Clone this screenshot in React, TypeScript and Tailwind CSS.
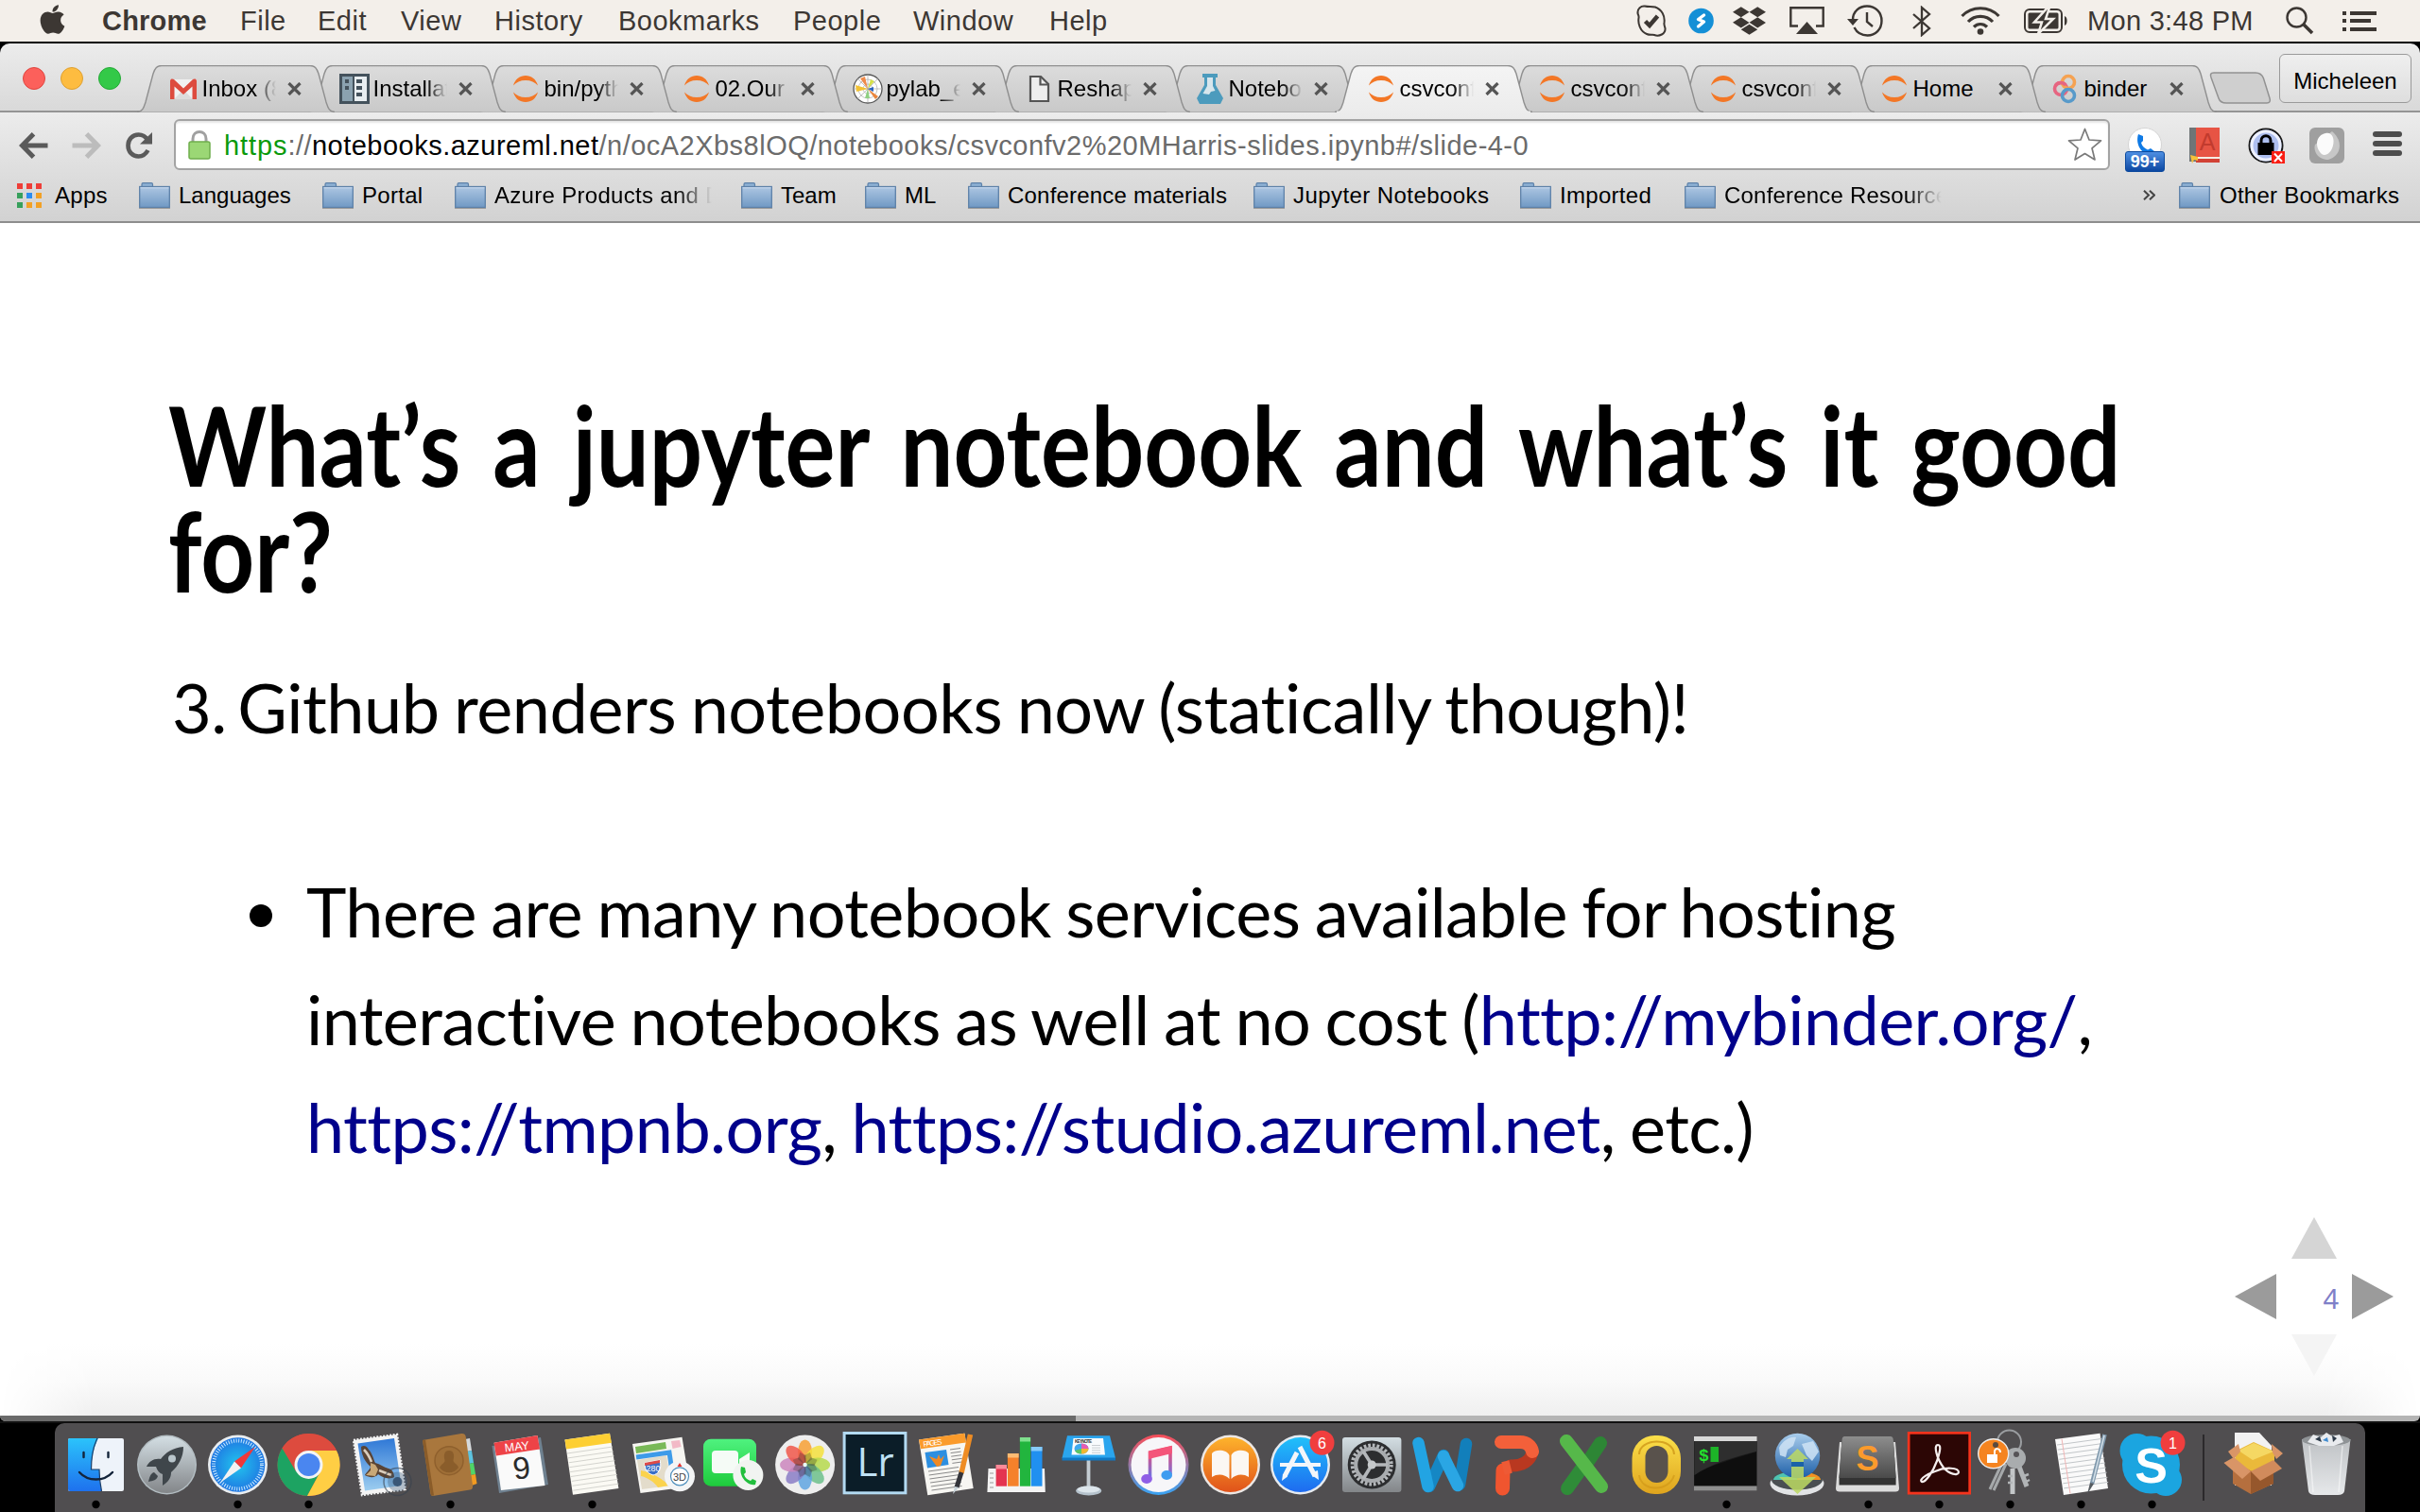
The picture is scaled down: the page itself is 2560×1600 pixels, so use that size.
import type { ReactNode } from "react";
import { FaApple, FaDropbox } from "react-icons/fa";

/* ---------- Menu bar ---------- */

const MENUS = [
  { label: "File", box: "w-[82px]" },
  { label: "Edit", box: "w-[88px]" },
  { label: "View", box: "w-[99px]" },
  { label: "History", box: "w-[131px]" },
  { label: "Bookmarks", box: "w-[185px]" },
  { label: "People", box: "w-[127px]" },
  { label: "Window", box: "w-[144px]" },
  { label: "Help", box: "w-[80px]" },
];

function MenuBar() {
  return (
    <header className="flex h-[44px] items-center bg-[#f3efea] text-[29px] leading-[44px] tracking-[0.5px] text-[#3c3733]">
      <div className="flex w-[108px] justify-start pl-[42px]">
        <FaApple className="-mt-1 h-[35px] w-[27px]" />
      </div>
      <div className="w-[146px] font-bold tracking-[0.2px]">Chrome</div>
      {MENUS.map((m) => (
        <div key={m.label} className={m.box}>
          {m.label}
        </div>
      ))}
      <div className="ml-auto flex h-[44px] items-center">
        <svg className="mr-[23px] h-[34px] w-[32px]" viewBox="0 0 32 34" fill="none" stroke="#3c3733" strokeWidth="2">
          <path d="M9 1.500 C5 1 1 4 1.500 9 C1.800 11 3 12 2.500 14 C1.500 20 4 28 11 31 C14 32.500 17 31.500 19 32 C24 34 31 31 30.500 25 C30.300 23 29 22 29.500 19 C30.500 12 27 5 20 2.500 C16 1.500 13 2.500 9 1.500Z" />
          <path d="M9.500 17.500 L14 22 L22.500 12" strokeWidth="4.500" />
        </svg>
        <svg className="mr-[20px] h-[28px] w-[27px]" viewBox="0 0 27 28">
          <circle cx="13.500" cy="14" r="13.300" fill="#148fd6" />
          <path d="M16.500 8 L10.500 12.500 L16.500 15 L10.500 20" fill="none" stroke="#fff" strokeWidth="3.400" strokeLinecap="round" strokeLinejoin="round" />
        </svg>
        <FaDropbox className="mr-[25px] h-[38px] w-[35px]" />
        <svg className="mr-[24px] h-[30px] w-[37px]" viewBox="0 0 37 30">
          <path d="M9 20.500 H1.300 V1.300 H35.700 V20.500 H28" fill="none" stroke="#3c3733" strokeWidth="2.400" />
          <path d="M18.500 16 L30 29 H7Z" fill="#3c3733" />
        </svg>
        <svg className="mr-[30px] h-[34px] w-[38px]" viewBox="0 0 38 34" fill="none" stroke="#3c3733" strokeWidth="2.400">
          <path d="M6 16 C6 7 13 1.500 21 1.500 C30 1.500 36.500 8 36.500 17 C36.500 26 30 32.500 21.500 32.500 C15 32.500 10 29 7.500 24" />
          <path d="M21 8 V18 L27 23" />
          <path d="M0 15 H12 L6 22Z" fill="#3c3733" stroke="none" />
        </svg>
        <svg className="mr-[30px] h-[33px] w-[22px]" viewBox="0 0 22 33" fill="none" stroke="#3c3733" strokeWidth="2.300">
          <path d="M2 9 L19 24 L11 31 V2 L19 9 L2 24" />
        </svg>
        <svg className="mr-[25px] h-[30px] w-[42px]" viewBox="0 0 42 30" fill="none" stroke="#3c3733" strokeWidth="3.200">
          <path d="M1.500 10 C12 -1 30 -1 40.500 10" />
          <path d="M8 16 C15 8.500 27 8.500 34 16" />
          <path d="M14 21.500 C18 17.500 24 17.500 28 21.500" />
          <circle cx="21" cy="26.500" r="3.300" fill="#3c3733" stroke="none" />
        </svg>
        <svg className="mr-[20px] h-[26px] w-[47px]" viewBox="0 0 47 26">
          <rect x="1" y="1" width="39" height="24" rx="5" fill="none" stroke="#3c3733" strokeWidth="2" />
          <rect x="4.500" y="4.500" width="32" height="17" rx="1.500" fill="#3c3733" />
          <path d="M43 8 C46.500 9 46.500 17 43 18Z" fill="#3c3733" />
          <path d="M25 -1 L11 14.500 H19 L15 27 L31 11 H23 L27 -1Z" fill="#3c3733" stroke="#f3efea" strokeWidth="2.500" />
        </svg>
        <div className="w-[210px] tracking-[0.3px] whitespace-nowrap">Mon 3:48 PM</div>
        <svg className="mr-[30px] h-[30px] w-[30px]" viewBox="0 0 30 30" fill="none" stroke="#3c3733">
          <circle cx="11.500" cy="11.500" r="10" strokeWidth="2.400" />
          <path d="M19 19 L28 28" strokeWidth="3.600" />
        </svg>
        <div className="mr-[46px] flex flex-col gap-[4.500px]">
          <div className="flex h-[4px] gap-[4px]">
            <i className="w-[4px] bg-[#3c3733]" />
            <i className="w-[28px] bg-[#3c3733]" />
          </div>
          <div className="flex h-[4px] gap-[4px]">
            <i className="w-[4px] bg-[#3c3733]" />
            <i className="w-[22px] bg-[#3c3733]" />
          </div>
          <div className="flex h-[4px] gap-[4px]">
            <i className="w-[4px] bg-[#3c3733]" />
            <i className="w-[28px] bg-[#3c3733]" />
          </div>
        </div>
      </div>
    </header>
  );
}

/* ---------- Tab strip ---------- */

const Jupyter = () => (
  <svg className="h-[32px] w-[32px]" viewBox="0 0 32 32" fill="#f37726">
    <path d="M3 12.500 C5 5.500 10 2 16 2 C22 2 27 5.500 29 12.500 C26 9 21.500 7 16 7 C10.500 7 6 9 3 12.500Z" />
    <path d="M3 19.500 C6 23 10.500 25 16 25 C21.500 25 26 23 29 19.500 C27 26.500 22 30 16 30 C10 30 5 26.500 3 19.500Z" />
  </svg>
);
const Gmail = () => (
  <svg className="h-[32px] w-[32px]" viewBox="0 0 32 32">
    <path d="M2 6 H30 V27 H2Z" fill="#f1f1f1" />
    <path d="M6 27 L16 17 L26 27Z" fill="#dcdcdc" />
    <path d="M2 27 V7.500 C2 5 5 5 6 6 L16 15.500 L26 6 C27 5 30 5 30 7.500 V27 H25.500 V13.500 L16 22 L6.500 13.500 V27Z" fill="#dd4b3e" />
  </svg>
);
const Install = () => (
  <svg className="h-[32px] w-[32px]" viewBox="0 0 32 32">
    <rect width="32" height="32" fill="#44525c" />
    <rect x="3" y="3" width="11" height="26" fill="#8ba2b0" />
    <rect x="16" y="3" width="13" height="26" fill="#e8eef1" />
    <path d="M6 6h4v4H6zM6 13h4v4H6zM18 6h6v4h-6zM18 13h6v4h-6zM18 20h6v4h-6z" fill="#44525c" />
  </svg>
);
const Matplotlib = () => (
  <svg className="h-[32px] w-[32px]" viewBox="0 0 32 32">
    <circle cx="16" cy="16" r="15" fill="#fff" stroke="#555" strokeWidth="1.300" />
    <g fill="none" stroke="#aaa" strokeWidth=".7">
      <circle cx="16" cy="16" r="5" />
      <circle cx="16" cy="16" r="10" />
      <path d="M1 16H31M16 1V31M5.500 5.500L26.500 26.500M26.500 5.500L5.500 26.500" />
    </g>
    <path d="M16 16 L8 5 L13 3Z" fill="#ef8a4a" />
    <path d="M16 16 L3 12 L4 19Z" fill="#f2c233" />
    <path d="M16 16 L19 6 L23 8Z" fill="#d5e04a" />
    <path d="M16 16 L24 27 L27 24Z" fill="#e9853d" />
    <path d="M16 16 L22 14 L22 19Z" fill="#2b64c0" />
    <path d="M16 16 L13 26 L18 26Z" fill="#8fd082" />
  </svg>
);
const Page = () => (
  <svg className="h-[32px] w-[32px]" viewBox="0 0 32 32" fill="none" stroke="#555" strokeWidth="2.200">
    <path d="M7 3 H18 L26 11 V29 H7Z" fill="#eee" />
    <path d="M17.500 3 V11.500 H26" />
  </svg>
);
const Flask = () => (
  <svg className="h-[32px] w-[32px]" viewBox="0 0 32 32">
    <path d="M8 0 H24 V4 H22 V12 L30 26 L27 32 H5 L2 26 L10 12 V4 H8Z" fill="#4c9bbd" />
    <path d="M13 4 H19 V13 L21.500 18 L17 19 L15 22 L8.500 21 L13 13Z" fill="#d8e6ec" />
  </svg>
);
const Binder = () => (
  <svg className="h-[32px] w-[32px]" viewBox="0 0 32 32" fill="none" strokeWidth="3.600">
    <circle cx="11" cy="16" r="6.500" stroke="#e66581" />
    <circle cx="19" cy="9" r="6.500" stroke="#f5a252" />
    <circle cx="19" cy="23" r="6.500" stroke="#579aca" />
    <path d="M5.200 13 A6.500 6.500 0 0 1 16 12" stroke="#e66581" />
  </svg>
);

const TABS: { title: string; icon: ReactNode; active?: boolean; whole?: boolean }[] = [
  { title: "Inbox (8", icon: <Gmail /> },
  { title: "Installat", icon: <Install /> },
  { title: "bin/pyth", icon: <Jupyter /> },
  { title: "02.Our", icon: <Jupyter /> },
  { title: "pylab_e", icon: <Matplotlib /> },
  { title: "Reshap", icon: <Page /> },
  { title: "Notebo", icon: <Flask /> },
  { title: "csvconf", icon: <Jupyter />, active: true },
  { title: "csvconf", icon: <Jupyter /> },
  { title: "csvconf", icon: <Jupyter /> },
  { title: "Home", icon: <Jupyter />, whole: true },
  { title: "binder", icon: <Binder />, whole: true },
];

const TAB_PATH =
  "M0 49.500 C6 49 7 45 9 39 L17 9 C19 3 21 .5 26 .5 H183 C188 .5 190 3 192 9 L200 39 C202 45 203 49 209 49.500";

function Tab({ tab, index }: { tab: (typeof TABS)[number]; index: number }) {
  return (
    <div className="relative h-[50px] w-[181px] shrink-0" style={{ zIndex: tab.active ? 30 : 20 - index }}>
      <svg className="absolute top-0 left-0 h-[50px] w-[209px]" viewBox="0 0 209 50">
        <path d={TAB_PATH} fill={tab.active ? "url(#tabOn)" : "url(#tabOff)"} stroke="#8f8f8f" strokeWidth="1.400" />
        {tab.active && <path d="M2 49.500 H207" stroke="#ececec" strokeWidth="2" />}
      </svg>
      <div className="relative flex h-[50px] items-center pl-[33px]">
        {tab.icon}
        <div
          className={
            tab.whole
              ? "ml-[3.500px] w-[86px] text-[24px] leading-[48px] whitespace-nowrap text-black"
              : "mr-[8px] ml-[3.500px] w-[78px] overflow-hidden text-[24px] leading-[48px] whitespace-nowrap text-black [mask-image:linear-gradient(to_right,black_72%,transparent_100%)]"
          }
        >
          {tab.title}
        </div>
        <svg className="ml-[4px] h-[14px] w-[15px]" viewBox="0 0 15 14" stroke="#555" strokeWidth="3.200">
          <path d="M1.500 1 L13.500 13 M13.500 1 L1.500 13" />
        </svg>
      </div>
    </div>
  );
}

function TabStrip() {
  return (
    <div className="bg-black">
      <div className="flex h-[73px] items-end rounded-t-[10px] border-b-2 border-[#949494] bg-linear-to-b from-[#ececec] to-[#d9d9d9]">
        <svg className="h-0 w-0">
          <defs>
            <linearGradient id="tabOff" x1="0" x2="0" y1="0" y2="1">
              <stop offset="0" stopColor="#dcdcdc" />
              <stop offset="1" stopColor="#c9c9c9" />
            </linearGradient>
            <linearGradient id="tabOn" x1="0" x2="0" y1="0" y2="1">
              <stop offset="0" stopColor="#f4f4f4" />
              <stop offset="1" stopColor="#ececec" />
            </linearGradient>
          </defs>
        </svg>
        <div className="mb-[22px] ml-[24px] flex w-[121px] gap-4">
          <i className="h-6 w-6 rounded-full border border-[#e0443e] bg-[#fc605b]" />
          <i className="h-6 w-6 rounded-full border border-[#dea030] bg-[#fdbc40]" />
          <i className="h-6 w-6 rounded-full border border-[#24a936] bg-[#33c948]" />
        </div>
        <div className="isolate -mb-[2px] flex h-[50px]">
          {TABS.map((tab, i) => (
            <Tab key={i} tab={tab} index={i} />
          ))}
        </div>
        <svg className="mb-[7px] ml-[20px] h-[34px] w-[66px]" viewBox="0 0 66 34">
          <path
            d="M5 1 H49 C54 1 56 3 57.500 7 L64 28 C65 31 64 33 61 33 H18 C13 33 11 31 10 28 L2 6 C1 3 1 1 5 1Z"
            fill="#cfcfcf"
            stroke="#929292"
            strokeWidth="1.500"
          />
        </svg>
        <div className="mb-[8px] ml-[8px] h-[52px] w-[140px] rounded-[6px] border border-[#9a9a9a] bg-linear-to-b from-[#efefef] to-[#dedede] text-center text-[24px] leading-[55px] text-black">
          Micheleen
        </div>
      </div>
    </div>
  );
}

/* ---------- Toolbar ---------- */

function Extensions() {
  return (
    <>
      <div className="relative ml-[18px] h-[48px] w-[38px] self-start">
        <svg className="h-[36px] w-[38px]" viewBox="0 0 38 36">
          <circle cx="19" cy="18" r="17.500" fill="#fff" stroke="#d4d4d4" />
          <path d="M12 7 L17 9 L17 14 L15 16 C16 20 19 22 22 23.500 L25 22 L29 25 L27 29 C18 31 8 19 12 7Z" fill="#0f7ae5" />
        </svg>
        <div className="absolute top-[25px] -left-[2px] h-[22px] w-[42px] rounded-[3px] border border-[#0c4a9e] bg-linear-to-b from-[#4e8fe2] to-[#0b48a2] text-center text-[18px] leading-[21px] font-bold text-white">
          99+
        </div>
      </div>
      <svg className="ml-[27px] h-[38px] w-[34px]" viewBox="0 0 34 38">
        <rect x="1" y="0" width="9" height="36" fill="#6f7577" />
        <rect x="8" y="0" width="25" height="31" fill="#e75444" />
        <text x="20" y="24" fontSize="25" textAnchor="middle" fill="#c23b2e">A</text>
        <path d="M8 31 H33 V33 H8Z" fill="#f6eee4" />
        <path d="M8 33 H33 V37 H8Z" fill="#d24236" />
        <path d="M2 29 L10 31 V35 L6 34 L4 38Z" fill="#f5c13a" />
      </svg>
      <svg className="ml-[29px] h-[38px] w-[39px]" viewBox="0 0 39 38">
        <circle cx="19" cy="19" r="17.500" fill="#aebff0" stroke="#1a1a1a" strokeWidth="2" />
        <circle cx="19" cy="19" r="15" fill="none" stroke="#eef1ff" strokeWidth="3" />
        <path d="M14 17 V14 C14 7 24 7 24 14 V17" fill="none" stroke="#000" strokeWidth="3" />
        <rect x="10.500" y="16" width="17" height="13" fill="#000" />
        <rect x="25" y="25" width="14" height="13" fill="#fa1e14" />
        <path d="M28 27.500 L36 36 M36 27.500 L28 36" stroke="#fff" strokeWidth="2" />
      </svg>
      <svg className="ml-[26px] h-[38px] w-[38px]" viewBox="0 0 38 38">
        <rect width="37" height="38" rx="6" fill="#9f9f9f" />
        <path d="M24 4 C36 14 34 30 20 34 C8 34 4 24 6 18Z" fill="#c7c7c7" />
        <path d="M17 6 C24 4 27 12 25 19 C23 27 17 31 13 28 C5 20 7 8 17 6Z" fill="#fbfbfb" />
      </svg>
      <div className="ml-[29px] flex w-[31px] flex-col gap-[4px] self-start pt-[4px]">
        <i className="h-[6px] rounded-full bg-[#4d4d4d]" />
        <i className="h-[6px] rounded-full bg-[#4d4d4d]" />
        <i className="h-[6px] rounded-full bg-[#4d4d4d]" />
      </div>
    </>
  );
}

function AddressRow() {
  return (
    <div className="flex h-[62px] items-start pt-[7px]">
      <svg className="mt-[14px] ml-[20px] h-[28px] w-[32px]" viewBox="0 0 32 28" fill="none" stroke="#5a5a5a" strokeWidth="5">
        <path d="M30.500 14 H5 M15.500 1.800 L3.500 14 L15.500 26.200" />
      </svg>
      <svg className="mt-[14px] ml-[23px] h-[28px] w-[32px]" viewBox="0 0 32 28" fill="none" stroke="#bcbcbc" strokeWidth="5">
        <path d="M1.500 14 H27 M16.500 1.800 L28.500 14 L16.500 26.200" />
      </svg>
      <svg className="mt-[14px] ml-[26px] h-[28px] w-[29px]" viewBox="0 0 29 28">
        <path d="M23.500 19 C21 23.500 17.500 25.500 13.500 25.500 C7 25.500 2.500 20.500 2.500 14 C2.500 7.500 7 2.500 13.500 2.500 C18 2.500 21 4.500 23 8" fill="none" stroke="#5a5a5a" strokeWidth="4.600" />
        <path d="M28 0 V12.500 H15Z" fill="#5a5a5a" />
      </svg>
      <div className="ml-[22px] flex h-[54px] w-[2048px] items-center rounded-[6px] border-2 border-[#a3a3a3] bg-white shadow-[inset_0_2px_2px_#e6e6e6]">
        <svg className="ml-[13px] h-[31px] w-[24px]" viewBox="0 0 24 31">
          <path d="M5 13 V9 C5 -1 19 -1 19 9 V13" fill="none" stroke="#a0a0a0" strokeWidth="3" />
          <rect x="1" y="12" width="22" height="18" rx="2" fill="#9bd775" stroke="#6fae4c" strokeWidth="1.500" />
        </svg>
        <div className="ml-[14px] pt-[2px] text-[29px] leading-[50px] tracking-[0.480px] whitespace-nowrap text-[#6b6b6b]">
          <span className="tracking-[0.900px] text-[#0b9a0b]">https</span>://<span className="text-black">notebooks.azureml.net</span>
          /n/ocA2Xbs8lOQ/notebooks/csvconfv2%20MHarris-slides.ipynb#/slide-4-0
        </div>
        <svg className="mr-[6px] ml-auto h-[36px] w-[37px]" viewBox="0 0 37 36">
          <path
            d="M18.500 1.500 L23 13 L35.500 13.800 L26 21.800 L29 34 L18.500 27.500 L8 34 L11 21.800 L1.500 13.800 L14 13Z"
            fill="#fff"
            stroke="#7a7a7a"
            strokeWidth="1.700"
            strokeLinejoin="round"
          />
        </svg>
      </div>
      <div className="flex h-[54px] items-start pt-[9px]">
        <Extensions />
      </div>
    </div>
  );
}

const Folder = () => (
  <svg className="h-[28px] w-[33px] shrink-0" viewBox="0 0 33 28">
    <defs>
      <linearGradient id="folder" x1="0" x2="0" y1="0" y2="1">
        <stop offset="0" stopColor="#adc6e2" />
        <stop offset="1" stopColor="#7099c4" />
      </linearGradient>
    </defs>
    <path d="M3 6 V2 C3 1 3.500 .6 4.500 .6 H13 C14 .6 14.500 1 14.500 2 V6" fill="#8db0d4" stroke="#5d81a8" strokeWidth="1.200" />
    <rect x=".7" y="4.500" width="31.600" height="22" fill="url(#folder)" stroke="#5d81a8" strokeWidth="1.300" />
    <path d="M1.500 5.800 H31.500" stroke="#c9dbef" strokeWidth="1" />
    <path d="M0 27.500 H33" stroke="#9b9b9b" strokeWidth="1" />
  </svg>
);

const FADE = "overflow-hidden [mask-image:linear-gradient(to_right,black_84%,transparent_100%)]";

const BOOKMARKS = [
  { label: "Languages", box: "w-[152px]", track: "tracking-normal", fade: false },
  { label: "Portal", box: "w-[98px]", track: "tracking-[0.3px]", fade: false },
  { label: "Azure Products and D", box: "mr-[31px] w-[230px]", track: "tracking-[0.3px]", fade: true },
  { label: "Team", box: "w-[89px]", track: "tracking-normal", fade: false },
  { label: "ML", box: "w-[67px]", track: "tracking-normal", fade: false },
  { label: "Conference materials", box: "w-[260px]", track: "tracking-[0.200px]", fade: false },
  { label: "Jupyter Notebooks", box: "w-[240px]", track: "tracking-[0.430px]", fade: false },
  { label: "Imported", box: "w-[132px]", track: "tracking-[0.300px]", fade: false },
  { label: "Conference Resources", box: "w-[230px]", track: "tracking-[0.200px]", fade: true },
];

function BookmarksBar() {
  return (
    <div className="flex h-[55px] items-center pb-[1px] text-[24px] leading-[48px] whitespace-nowrap text-black">
      <div className="ml-[18px] grid grid-cols-3 gap-x-[4px] gap-y-[4px]">
        {["bg-[#ee3e38]", "bg-[#ee3e38]", "bg-[#ee3e38]", "bg-[#37a05c]", "bg-[#2b8cf0]", "bg-[#f2a126]", "bg-[#37a05c]", "bg-[#f2a126]", "bg-[#f2a126]"].map(
          (c, i) => (
            <i key={i} className={"h-[6px] w-[6px] " + c} />
          ),
        )}
      </div>
      <div className="ml-[14px] w-[89px] tracking-[0.3px]">Apps</div>
      {BOOKMARKS.map((b) => (
        <div key={b.label} className="flex items-center">
          <Folder />
          <div className={"ml-[9px] " + b.box + " " + b.track + " " + (b.fade ? FADE : "")}>{b.label}</div>
        </div>
      ))}
      <svg className="ml-auto h-[11px] w-[13px]" viewBox="0 0 13 11" fill="none" stroke="#444" strokeWidth="2">
        <path d="M1 .7 L6 5.500 L1 10.300 M7 .7 L12 5.500 L7 10.300" />
      </svg>
      <div className="ml-[25px] flex items-center">
        <Folder />
        <div className="ml-[10px] w-[212px] tracking-[0.240px]">Other Bookmarks</div>
      </div>
    </div>
  );
}

/* ---------- Slide ---------- */

function SlideControls() {
  return (
    <nav className="absolute top-[1052px] left-[2364px] grid w-[168px] grid-cols-[44px_80px_44px] grid-rows-[44px_80px_44px]">
      <svg className="col-start-2 row-start-1 h-[44px] w-[48px] justify-self-center" viewBox="0 0 48 44">
        <path d="M24 0 L48 44 H0Z" fill="#d5d5d5" />
      </svg>
      <svg className="col-start-1 row-start-2 h-[48px] w-[44px] self-center" viewBox="0 0 44 48">
        <path d="M44 0 V48 L0 24Z" fill="#9b9b9b" />
      </svg>
      <span className="col-start-2 row-start-2 mt-[3px] mr-[14px] self-center justify-self-end font-['Noto_Sans'] text-[29px] leading-[30px] text-[#7f80c8]">4</span>
      <svg className="col-start-3 row-start-2 h-[48px] w-[44px] self-center" viewBox="0 0 44 48">
        <path d="M0 0 V48 L44 24Z" fill="#9b9b9b" />
      </svg>
      <svg className="col-start-2 row-start-3 h-[44px] w-[48px] justify-self-center" viewBox="0 0 48 44">
        <path d="M24 44 L48 0 H0Z" fill="#f4f4f4" />
      </svg>
    </nav>
  );
}

function Slide() {
  return (
    <main className="relative flex h-[1262px] flex-col bg-white pt-[178px] font-['Lato'] text-black">
      <div className="absolute inset-x-0 bottom-0 h-[76px] bg-linear-to-b from-white via-[#fafafa] to-[#efefef] [mask-image:linear-gradient(to_right,transparent_0,black_100px,black_2460px,transparent_100%)]" />
      <h1 className="ml-[178px] w-[2450px] origin-left scale-x-[0.848] text-[117px] leading-[112px] font-bold [word-spacing:11.700px]">
        What’s a jupyter notebook and what’s it good
        <br />
        for?
      </h1>
      <div className="relative text-[72px] leading-[114px] tracking-[-0.600px] whitespace-nowrap [word-spacing:-2.400px]">
        <p className="mt-[53px] ml-[182px] tracking-[-0.480px]">
          3.<span className="-ml-[4px]"> Github renders notebooks now (statically though)!</span>
        </p>
        <ul className="mt-[102px] ml-[264px]">
          <li className="flex">
            <i className="mt-[50px] mr-[36px] h-[24px] w-[24px] rounded-full bg-black" />
            <div>
              There are many notebook services available for hosting
              <br />
              interactive notebooks as well at no cost (<a className="text-[#00008b]">http://mybinder.org/</a>,
              <br />
              <a className="text-[#00008b]">https://tmpnb.org</a>, <a className="text-[#00008b]">https://studio.azureml.net</a>, etc.)
            </div>
          </li>
        </ul>
      </div>
      <SlideControls />
    </main>
  );
}

/* ---------- Dock ---------- */

function Badge({ n }: { n: string }) {
  return (
    <>
      <circle cx="59.500" cy="20.700" r="13" fill="#f03e3e" />
      <text x="59.500" y="26.500" fontSize="16" textAnchor="middle" fill="#fff">{n}</text>
    </>
  );
}

const lines = (count: number, x1: number, y1: number, x2: number, y2: number, dx: number, dy: number) =>
  Array.from({ length: count }, (_, i) => `M${x1 + dx * i} ${y1 + dy * i} L${x2 + dx * i} ${y2 + dy * i}`).join(" ");

const PETALS = ["#f7a035", "#f5e13c", "#b6d94c", "#6cc08b", "#5fa5e0", "#8a7cc5", "#cb86bd", "#f0574a"];

const APPS: { name: string; run?: boolean; art: ReactNode }[] = [
  {
    name: "Finder",
    run: true,
    art: (
      <>
        <rect x="8" y="16" width="59" height="56" rx="2" fill="#eef3fa" />
        <path d="M10 16 H40 C35 26 33 36 32.500 49 H41 C41 57 42 65 43.500 72 H10 Q8 72 8 70 V18 Q8 16 10 16Z" fill="url(#finder)" />
        <path d="M39 16 C34 26 32.500 36 32.500 49 H41 C41 57 42 65 43.500 72" fill="none" stroke="#1d3e66" strokeWidth="1.200" />
        <path d="M24.500 31 V36 M50.500 31 V36 M20 52 C29 62 46 62 55 52" fill="none" stroke="#14243a" strokeWidth="2.400" strokeLinecap="round" />
      </>
    ),
  },
  {
    name: "Launchpad",
    art: (
      <>
        <circle cx="37.500" cy="44" r="31.500" fill="#b3bdc2" />
        <circle cx="37.500" cy="44" r="30" fill="url(#silver)" />
        <path d="M55 25 C44 26 36 31 31 38 C24 37 19 40 16 46 L26 46 C27 50 30 53 33 54 L33 66 C39 62 42 58 42 52 C50 45 55 36 55 25Z" fill="#3f464b" />
        <circle cx="43" cy="37.500" r="4" fill="#b9c6cc" />
        <path d="M24 52 C20 53 19 58 18 62 C23 61 27 60 28 56Z" fill="#3f464b" />
      </>
    ),
  },
  {
    name: "Safari",
    run: true,
    art: (
      <>
        <circle cx="37.500" cy="44" r="31.500" fill="#e9edf0" />
        <circle cx="37.500" cy="44" r="28.800" fill="url(#safari)" />
        <circle cx="37.500" cy="44" r="25.500" fill="none" stroke="#cdeaff" strokeWidth="4" strokeDasharray="1 1.670" />
        <path d="M56 25 L41 47.500 L34 40.500Z" fill="#f0383a" />
        <path d="M19 63 L34 40.500 L41 47.500Z" fill="#f2f2f2" />
      </>
    ),
  },
  {
    name: "Chrome",
    run: true,
    art: (
      <>
        <circle cx="37.500" cy="44" r="33" fill="#dd4b3e" />
        <path d="M9.500 26.500 A33 33 0 0 0 36 77 L50 51 L37.500 44Z" fill="#1da362" />
        <path d="M36 77 A33 33 0 0 0 67 29 L37.500 29 L50 51Z" fill="#ffce44" />
        <path d="M9.500 26.500 L24 51 L37.500 44 V29 H67 C62 18 51 11 37.500 11 C26 11 15 17 9.500 26.500Z" fill="#dd4b3e" />
        <circle cx="37.500" cy="44" r="15" fill="#f4f4f4" />
        <circle cx="37.500" cy="44" r="12" fill="#4a86f0" />
      </>
    ),
  },
  {
    name: "Mail",
    art: (
      <>
        <path d="M10 18 L56 12 L64.500 70 L19 76Z" fill="#f4f4f4" stroke="#f4f4f4" strokeWidth="2.500" strokeDasharray="2 1.500" />
        <path d="M14.500 21.500 L53 16 L60.500 66 L22 71.500Z" fill="url(#sky)" />
        <path d="M18 25 C21 23 24 24 26 28 C30 32 31 38 33 42 C38 43 42 47 47 48 C51 49 53 53 53 57 C48 60 41 58 36 54 C33 58 27 58 22 55 C23 52 27 50 28 46 C22 41 18 33 18 25Z" fill="#5a4435" />
        <path d="M28 42 L33 44 L36 49 L33 56 L23 55 L28 50Z" fill="#c9a877" />
        <path d="M21 28 C24 31 27 36 29 41 M37 50 L50 55" stroke="#d9cdbd" strokeWidth="2.600" fill="none" />
        <circle cx="56.500" cy="62" r="14.500" fill="none" stroke="#39424e" strokeWidth="1.500" opacity=".6" />
        <circle cx="56.500" cy="62" r="10.500" fill="#3a5878" opacity=".35" />
        <circle cx="56.500" cy="62" r="5" fill="#2d4664" opacity=".8" />
      </>
    ),
  },
  {
    name: "Contacts",
    run: true,
    art: (
      <>
        <path d="M53 17 L58 16 L60 29 L55 30Z" fill="#d5d9db" />
        <path d="M55 30 L60 29 L62 42 L57 43Z" fill="#5cc3e0" />
        <path d="M57 43 L62 42 L64 54 L59 55Z" fill="#4fd667" />
        <path d="M59 55 L64 54 L65.500 64 L60 66Z" fill="#f29b21" />
        <path d="M8 18 L49 11 Q53 10.500 53.700 14 L61 66 Q61.500 70 58 70.500 L19 77 Q17 77 16.500 75Z" fill="#a9773d" />
        <path d="M8 18 L11 17.500 L20 76.500 L17 76.500Z" fill="#8a5c29" />
        <circle cx="36" cy="39.700" r="15" fill="#a07038" stroke="#8f602d" strokeWidth="1.500" />
        <path d="M36 29 C41 29 42 34 40.500 39 C40 42 45 43 46 47 C41 54 31 54 26 47 C28 43 32 42 31.500 39 C30 34 31 29 36 29Z" fill="#8a5d2b" />
      </>
    ),
  },
  {
    name: "Calendar",
    art: (
      <>
        <path d="M6.500 24 L58 15 L66 65 L14 74Z" fill="#6f8190" />
        <path d="M8.600 20.700 L54.500 13 L62.500 66 L16 71Z" fill="#fafafa" />
        <path d="M8.600 20.700 L54.500 13 L57 27.500 L10.800 34.500Z" fill="#ee4347" />
        <g transform="rotate(-7 33 26)">
          <text x="33" y="29" fontSize="12.500" textAnchor="middle" fill="#fff">MAY</text>
          <text x="35" y="59" fontSize="33" textAnchor="middle" fill="#2b2b2b">9</text>
        </g>
      </>
    ),
  },
  {
    name: "Notes",
    run: true,
    art: (
      <>
        <path d="M8.500 17.500 L56 10.700 L65.400 69 L17 75.700Z" fill="#fbfaf4" />
        <path d="M8.500 17.500 L56 10.700 L58 20.700 L10 27.500Z" fill="#fdcf33" />
        <path d={lines(9, 11, 32, 59, 25, 0.8, 4.9)} stroke="#cfcfca" strokeWidth=".9" />
      </>
    ),
  },
  {
    name: "Maps",
    art: (
      <>
        <path d="M5 22 L57.500 14.700 L66 67 L13.500 74Z" fill="#f6f5f1" />
        <path d="M8 25 L40 20 L41 27 L9 32Z" fill="#79b957" />
        <path d="M46 19 L55 18 L56.500 25 L47.500 27Z" fill="#f2b9c6" />
        <path d="M10 39 L41 34 L46 66 L15 70Z" fill="#e3dccb" />
        <path d="M14 50 C26 52 38 60 44 66 L32 68 C28 62 20 57 14 56Z" fill="#fbd34d" />
        <path d="M9 36 L44 31 L48 58" fill="none" stroke="#3d9be9" strokeWidth="5" />
        <path d="M18 42 L34 39 C37 50 31 54 27 55 C21 53 18 50 18 42Z" fill="#3a6fc8" stroke="#fff" />
        <path d="M18 42 L34 39 L34 42 L18 45Z" fill="#de4a47" />
        <text x="27" y="51" fontSize="9" textAnchor="middle" fill="#fff">280</text>
        <circle cx="55" cy="56.300" r="16" fill="#f3f4f5" />
        <circle cx="55" cy="56.300" r="9.500" fill="#fff" stroke="#4b8dbb" strokeWidth="1.200" />
        <text x="55" y="60.500" fontSize="11" textAnchor="middle" fill="#444">3D</text>
        <path d="M55 42 L57.500 46 H52.500Z" fill="#e5332e" />
      </>
    ),
  },
  {
    name: "FaceTime",
    art: (
      <>
        <rect x="5" y="16.700" width="56" height="50" rx="8" fill="url(#green)" />
        <rect x="14" y="29" width="28" height="24" rx="4" fill="#f5fbf6" />
        <path d="M43 38 L54 31 V51 L43 44Z" fill="#f5fbf6" />
        <circle cx="52.400" cy="55" r="16" fill="#f1f4f1" />
        <path d="M45 46 L49 47 L50 52 L48 54 C49 58 52 60 55 61 L57 59 L61 61 L60 65 C52 67 42 56 45 46Z" fill="#21bf3d" />
      </>
    ),
  },
  {
    name: "Photos",
    art: (
      <>
        <circle cx="37.600" cy="44" r="31.500" fill="#eeeeee" />
        {PETALS.map((c, i) => (
          <ellipse key={c} cx="37.600" cy="30.500" rx="7.500" ry="13" fill={c} opacity=".85" transform={`rotate(${i * 45} 37.600 44)`} />
        ))}
        {PETALS.map((c, i) => (
          <path key={c} d="M37.600 44 L32.800 35.500 L37.600 30 L42.400 35.500Z" fill="#333" opacity=".3" transform={`rotate(${i * 45 + 22.5} 37.600 44)`} />
        ))}
        <circle cx="37.600" cy="44" r="2.200" fill="#eafff5" />
      </>
    ),
  },
  {
    name: "Lightroom",
    art: (
      <>
        <rect x="2.600" y="9" width="67.800" height="66.300" fill="#b3daf2" />
        <rect x="5.600" y="12" width="61.800" height="60.300" fill="#0b1d28" />
        <text x="37" y="55.500" fontSize="42" textAnchor="middle" fill="#bfe1f4" fontFamily="Open Sans" fontWeight="500">Lr</text>
      </>
    ),
  },
  {
    name: "Pages",
    art: (
      <>
        <path d="M8 17.500 L56.400 10.700 L65.700 69 L17.300 76.300Z" fill="#f7f6f2" />
        <path d="M8 17.500 L56.400 10.700 L58 20.500 L10 27.300Z" fill="#fb9b2b" />
        <text x="13" y="25" fontSize="8" fill="#fff" transform="rotate(-8 13 25)" textLength="20">PAGES</text>
        <path d="M14.500 31 L37 28 L39.500 44 L17 47.500Z" fill="#2d8fe0" />
        <path d="M27 46 L19 35 L27 38 L29 33 L31 38 L35 34 L31 45Z" fill="#f08a24" />
        <path d={lines(5, 41, 28, 52, 26.5, 0.6, 3.6)} stroke="#8a8a8a" strokeWidth="1" />
        <path d={lines(6, 18, 51, 50, 46.5, 0.7, 4)} stroke="#8a8a8a" strokeWidth="1" />
        <path d="M62.500 12 L53 53" stroke="#ee8c23" strokeWidth="5.500" />
        <path d="M53 52 L48 68" stroke="#33343a" strokeWidth="5" />
        <path d="M50.300 68 L46 67 L44 75Z" fill="#c9d4db" />
      </>
    ),
  },
  {
    name: "Numbers",
    art: (
      <>
        <path d="M6.500 48 H66 L66.800 73 H5.400Z" fill="#f4f4f4" />
        <path d="M8 53 H12 M8 58 H12 M8 63 H12 M8 68 H12" stroke="#999" strokeWidth="1" />
        <rect x="14.600" y="44" width="11.400" height="22.700" fill="#e43350" />
        <rect x="26.900" y="32" width="11.700" height="34.700" fill="#f5812b" />
        <rect x="39.900" y="15" width="11.200" height="51.700" fill="#22b53e" />
        <rect x="51.700" y="25" width="11.800" height="41.700" fill="#2090f0" />
        <path d="M14.600 44 h11.400 v4.500 H14.600z" fill="#f98a98" />
        <path d="M26.900 32 h11.700 v4.500 H26.900z" fill="#fdbb74" />
        <path d="M39.900 15 h11.200 v4.500 H39.900z" fill="#7fe08d" />
        <path d="M51.700 25 h11.800 v4.500 H51.700z" fill="#86cbfb" />
      </>
    ),
  },
  {
    name: "Keynote",
    art: (
      <>
        <path d="M35.600 38 H39.400 V72 H35.600Z" fill="#c4ccd2" />
        <ellipse cx="37.700" cy="71.500" rx="13.500" ry="5" fill="#b5c2cc" />
        <ellipse cx="37.700" cy="70" rx="12" ry="3.500" fill="#dde6ec" />
        <path d="M15 13.300 H60 L66 37 H9.500Z" fill="#2aa5ee" />
        <path d="M9.500 36.500 H66 V39.500 H9.500Z" fill="#0f78c4" />
        <path d="M21.500 16 H53 L55 33.500 H19.500Z" fill="#f8fbfd" />
        <text x="23" y="20.500" fontSize="4.600" fontWeight="700" fill="#333" textLength="18">KEYNOTE</text>
        <ellipse cx="30" cy="27" rx="7.500" ry="5.500" fill="#3fa9ee" />
        <path d="M30 27 V21.500 A7.500 5.500 0 0 1 37.500 27Z" fill="#e55cb0" />
        <path d="M30 27 H37.500 A7.500 5.500 0 0 1 30 32.500Z" fill="#f0b632" />
        <path d="M30 27 V32.500 A7.500 5.500 0 0 1 23 29Z" fill="#5cc563" />
        <path d={lines(4, 41, 23.5, 50, 23.5, 0, 2.6)} stroke="#c9ced2" strokeWidth="1" />
      </>
    ),
  },
  {
    name: "iTunes",
    art: (
      <>
        <circle cx="36.500" cy="44" r="32" fill="url(#itunesRing)" />
        <circle cx="36.500" cy="44" r="29" fill="#f7f6f9" />
        <path d="M27.500 60 V31 L49 26 V54" fill="none" stroke="url(#itunesNote)" strokeWidth="3.600" />
        <path d="M26 30 L50.700 24 V32 L26 38Z" fill="#f4557a" />
        <ellipse cx="24" cy="59" rx="5.800" ry="5" fill="#8f5ee6" />
        <ellipse cx="45.200" cy="55" rx="5.800" ry="5" fill="#3e9cf0" />
      </>
    ),
  },
  {
    name: "iBooks",
    art: (
      <>
        <circle cx="37.500" cy="44" r="31.500" fill="#ece7e4" />
        <circle cx="37.500" cy="44" r="29" fill="url(#ibooks)" />
        <path d="M36.500 59 V34 C34 28 22 27 18 32 V57 C24 53 32 54 36.500 59Z" fill="#fbf7f3" />
        <path d="M38.500 59 V34 C41 28 53 27 57 32 V57 C51 53 43 54 38.500 59Z" fill="#fbf7f3" />
      </>
    ),
  },
  {
    name: "App Store",
    art: (
      <>
        <circle cx="36.500" cy="44" r="31.500" fill="#e6ebf0" />
        <circle cx="36.500" cy="44" r="29" fill="url(#appstore)" />
        <path d="M15 44 H58" stroke="#f3f6fa" strokeWidth="4" />
        <path d="M33 31 L20 56 M36 25 L52 56" stroke="#f3f6fa" strokeWidth="5" />
        <path d="M18 54 L23 56.500 L17 61Z M49 52 L55 50 L56 60 L50 56Z" fill="#f3f6fa" />
        <Badge n="6" />
      </>
    ),
  },
  {
    name: "System Preferences",
    art: (
      <>
        <rect x="6" y="15" width="62.400" height="58" rx="3" fill="url(#silver)" />
        <circle cx="37.200" cy="44" r="25.500" fill="#2c2d2f" />
        <circle cx="37.200" cy="44" r="20.500" fill="none" stroke="#b4b7ba" strokeWidth="4" strokeDasharray="2.700 1.900" />
        <circle cx="37.200" cy="44" r="17" fill="none" stroke="#a9acaf" strokeWidth="4" />
        <path d="M37.200 44 L28 29.500 M37.200 44 H54 M37.200 44 L28 59" stroke="#b4b7ba" strokeWidth="3.600" />
        <circle cx="37.200" cy="44" r="4.500" fill="#c5c8ca" />
      </>
    ),
  },
  {
    name: "Word",
    art: (
      <g fill="none" strokeLinecap="round" strokeWidth="12.500">
        <path d="M62 22 L55 65" stroke="#127fbb" />
        <path d="M23 67 L38 34" stroke="#1587c4" />
        <path d="M38 35 L53 66" stroke="#2aa6e4" />
        <path d="M11.500 21 L21.500 67" stroke="#22a4e3" />
      </g>
    ),
  },
  {
    name: "PowerPoint",
    art: (
      <g fill="none" strokeLinecap="round">
        <path d="M44 20 C64 20 60 46 34 45" stroke="#b93820" strokeWidth="13" />
        <path d="M24 20 H44 C52 20 56 25 57 30" stroke="#f3603a" strokeWidth="14" />
        <path d="M26 50 L25.500 69" stroke="#f0552f" strokeWidth="15" />
        <path d="M26 48 L34 46" stroke="#ee5a35" strokeWidth="14" strokeLinecap="butt" />
      </g>
    ),
  },
  {
    name: "Excel",
    art: (
      <g fill="none" strokeLinecap="round" strokeWidth="14">
        <path d="M54 21 L40 42" stroke="#2d8635" />
        <path d="M34 48 L19 69" stroke="#2f8c38" />
        <path d="M18 19 L55 67" stroke="#56b84a" />
      </g>
    ),
  },
  {
    name: "Outlook",
    art: (
      <>
        <rect x="12.500" y="13" width="51.500" height="62" rx="24" fill="url(#gold)" />
        <rect x="26.500" y="24" width="24" height="39" rx="12" fill="#59524c" />
        <path d="M20 33 C20 16 56 14 57 33" fill="none" stroke="#c98f12" strokeWidth="2" opacity=".7" />
        <path d="M20 55 C22 73 52 73 57 55" fill="none" stroke="#c98f12" strokeWidth="2" opacity=".5" />
      </>
    ),
  },
  {
    name: "Terminal",
    run: true,
    art: (
      <>
        <rect x="3" y="14" width="66.600" height="57.500" fill="#1c1c1c" />
        <rect x="3" y="14" width="66.600" height="5" fill="#d9d9d9" />
        <path d="M3.500 55 C20 44 45 38 69 30 V66 H3.500Z" fill="#0e0e0e" />
        <path d="M3.500 19 H69 V30 C45 36 20 43 3.500 55Z" fill="#2e2e2e" />
        <rect x="3" y="66.500" width="66.600" height="5" fill="#8f8f8f" />
        <text x="8" y="40" fontSize="18" fontFamily="Liberation Mono" fontWeight="700" fill="#23e02d">$</text>
        <rect x="20.500" y="25" width="8.500" height="16" fill="#1db428" />
      </>
    ),
  },
  {
    name: "Downloader",
    art: (
      <>
        <ellipse cx="37" cy="64" rx="28.500" ry="12.500" fill="#e2e4e6" />
        <ellipse cx="37" cy="60" rx="27" ry="10.500" fill="#4a4f52" />
        <path d="M12 60 A25 9 0 0 1 37 51 V60Z" fill="#4ec5b2" />
        <path d="M62 60 A25 9 0 0 0 37 51 V60Z" fill="#f29222" />
        <circle cx="37.500" cy="34.500" r="23.700" fill="url(#globe)" />
        <path d="M18 26 C22 18 30 14 36 15 L33 24 L27 28 L25 36 L19 34Z M42 22 L54 19 L60 30 L53 40 L47 34Z" fill="#cfe3f5" opacity=".85" />
        <path d="M37.500 27 L49 38 H44 V57 H57 L37.500 75 L18 57 H31 V38 H26Z" fill="#bcd963" opacity=".85" />
        <path d="M31 41 H44 V46 H31Z" fill="#1b62a8" />
      </>
    ),
  },
  {
    name: "Sublime Text",
    run: true,
    art: (
      <>
        <path d="M7 20 H66 L70 69 Q70 72.500 66 72.500 H7 Q3 72.500 3 69Z" fill="#dcdcdc" />
        <path d="M12 14 H61 Q63.500 14 63.800 17 L66.600 58 V65.500 H6.500 V58 L9.500 17 Q10 14 12 14Z" fill="#333" />
        <path d="M12 14 H61 Q63.500 14 63.800 17 L66.600 58 H6.500 L9.500 17 Q10 14 12 14Z" fill="url(#sublime)" />
        <text x="36.500" y="49.500" fontSize="36" fontWeight="700" textAnchor="middle" fill="#fb9a2c">S</text>
      </>
    ),
  },
  {
    name: "Acrobat",
    run: true,
    art: (
      <>
        <rect x="3.800" y="9" width="67.200" height="66.500" fill="#f5331c" />
        <rect x="6.500" y="11.700" width="61.800" height="61" fill="#2c0605" />
        <path d="M36 23 C31 23 35 38 42 47 C48 54 57 56 58 52 C58 47 44 46 33 51 C22 55 16 60 19 62 C23 63 31 51 35 40 C38 31 40 23 36 23Z" fill="none" stroke="#f4eeee" strokeWidth="2.200" />
      </>
    ),
  },
  {
    name: "Keychain Access",
    run: true,
    art: (
      <>
        <circle cx="36.500" cy="20" r="12.500" fill="none" stroke="#9a9da0" strokeWidth="2" />
        <path d="M30 40 L16 70 M33 43 L20 71" stroke="#a5a8aa" strokeWidth="3" />
        <path d="M40 48 V75" stroke="#c3c6c8" strokeWidth="5" />
        <path d="M47 46 L55 67" stroke="#b1b4b6" strokeWidth="5" />
        <path d="M40 56 H35 M40 63 H35 M52 56 L57 54 M54 62 L58 60" stroke="#b1b4b6" strokeWidth="2.500" />
        <circle cx="43" cy="37" r="11" fill="#a9acae" />
        <circle cx="44" cy="33" r="3" fill="#565356" />
        <ellipse cx="19.700" cy="32.300" rx="16" ry="15.500" fill="#f58420" stroke="#ececec" strokeWidth="1.400" />
        <circle cx="22" cy="23" r="3" fill="#5a4b41" />
        <rect x="13" y="33" width="11" height="9" fill="#fff" />
        <path d="M21 33 V30 C21 26 27 26 27 31" fill="none" stroke="#fff" strokeWidth="2" />
      </>
    ),
  },
  {
    name: "TextEdit",
    run: true,
    art: (
      <>
        <path d="M10 17 L57.500 10.700 L66 69 L19 76Z" fill="#fafafa" />
        <path d={lines(10, 12, 23, 59, 16.5, 0.8, 5.1)} stroke="#c2c6c9" strokeWidth="1" />
        <path d="M17 16.500 L26 74.500" stroke="#f0b4b4" strokeWidth="1" />
        <path d="M62.500 12 L49 64" stroke="#7f98ac" strokeWidth="4.600" />
        <path d="M62 13 L50 62" stroke="#d3dfe8" strokeWidth="1.500" />
        <path d="M51 64 L47 63 L44 75Z" fill="#565c61" />
      </>
    ),
  },
  {
    name: "Skype",
    run: true,
    art: (
      <>
        <circle cx="36.500" cy="44" r="30.500" fill="#1ba5e0" />
        <circle cx="21.500" cy="29" r="18" fill="#1ba5e0" />
        <circle cx="52" cy="60" r="17" fill="#1ba5e0" />
        <text x="36.500" y="62.500" fontSize="52" fontWeight="700" textAnchor="middle" fill="#fff">S</text>
        <Badge n="1" />
      </>
    ),
  },
];

const BoxArt = (
  <>
    <path d="M18 10 H44 L57 24 V66 H18Z" fill="#f2f2f2" />
    <path d="M16 50 L34 44 L59 48 V64 L35 75 L16 64Z" fill="#b56f3e" />
    <path d="M35 50 L59 44 V64 L35 75Z" fill="#96572c" />
    <path d="M22 28 L38 20 L60 30 V40 L36 51 L17 40Z" fill="#eab93a" />
    <path d="M22 29 L38 21 L59 30 L37 39Z" fill="#f5d863" />
    <path d="M6.500 42 L17 36 L35 51 L26 59Z" fill="#d99567" />
    <path d="M35 51 L59 39 L68 48 L45 61Z" fill="#d18b5c" />
    <path d="M11 30 L22 22 L24 30 L17 38Z M57 22 L69 32 L62 38 L58 31Z" fill="#d99567" />
  </>
);

const TrashArt = (
  <>
    <path d="M12 17 L63.500 17 L57 72 Q56 76 50 76 H26 Q20 76 19 72Z" fill="url(#trash)" />
    <ellipse cx="37.700" cy="18" rx="25.500" ry="6" fill="#8f9396" />
    <path d="M18 20 L24 12 L32 15 L38 10 L44 14 L52 12 L56 20 L46 24 L30 24Z" fill="#e9ebee" />
    <path d="M26 17 L31 14 L33 20Z M44 13 L49 16 L45 20Z" fill="#2c3947" />
    <path d="M34 18 L39 15 L40 20Z" fill="#3f8bd0" />
    <path d="M20 24 L24 73 M55 24 L51 73" stroke="#fff" strokeWidth="1.500" opacity=".5" />
  </>
);

function Grad({ id, from, to }: { id: string; from: string; to: string }) {
  return (
    <linearGradient id={id} x1="0" x2="0" y1="0" y2="1">
      <stop offset="0" stopColor={from} />
      <stop offset="1" stopColor={to} />
    </linearGradient>
  );
}

function DockItem({ run, art }: { run?: boolean; art: ReactNode }) {
  return (
    <svg className="h-[94px] w-[75px] shrink-0" viewBox="0 0 75 94" fontFamily="Liberation Sans">
      {art}
      {run && <circle cx="37.500" cy="86" r="4.200" fill="#000" />}
    </svg>
  );
}

function Dock() {
  return (
    <footer className="flex h-[94px] bg-black pl-[58px]">
      <svg className="absolute h-0 w-0">
        <defs>
          <Grad id="finder" from="#2bc3fb" to="#1e71ee" />
          <Grad id="silver" from="#d3dee3" to="#838689" />
          <Grad id="sky" from="#2f78d6" to="#9ccdf0" />
          <Grad id="green" from="#4ff27f" to="#1ecb3c" />
          <Grad id="ibooks" from="#fdb32c" to="#e0521a" />
          <Grad id="appstore" from="#20c0fa" to="#1e6bf0" />
          <Grad id="gold" from="#fbe04a" to="#dfa41e" />
          <Grad id="globe" from="#a9cdec" to="#1d5fa8" />
          <Grad id="sublime" from="#8d8d8d" to="#4a4a4a" />
          <Grad id="trash" from="#bfc2c5" to="#e6e8ea" />
          <Grad id="itunesRing" from="#fb4d57" to="#37a4f5" />
          <Grad id="itunesNote" from="#f9496a" to="#5f77ee" />
          <radialGradient id="safari">
            <stop offset="0" stopColor="#22c5ee" />
            <stop offset="1" stopColor="#1f77e2" />
          </radialGradient>
        </defs>
      </svg>
      <div className="flex w-[2444px] rounded-t-[10px] bg-[#504e50] pl-[5.500px]">
        {APPS.map((a) => (
          <DockItem key={a.name} run={a.run} art={a.art} />
        ))}
        <div className="mt-[12px] mr-[14px] ml-[16px] h-[70px] w-[2px] shrink-0 bg-[#2b292b]" />
        <DockItem art={BoxArt} />
        <div className="w-[2px] shrink-0" />
        <DockItem art={TrashArt} />
      </div>
    </footer>
  );
}

export default function App() {
  return (
    <div className="flex h-[1600px] w-[2560px] flex-col overflow-hidden bg-black font-['Liberation_Sans',sans-serif]">
      <MenuBar />
      <div className="h-[2px] bg-black" />
      <TabStrip />
      <div className="flex h-[117px] flex-col justify-between border-b-2 border-[#8d8d8d] bg-linear-to-b from-[#ececec] to-[#d2d2d2]">
        <AddressRow />
        <BookmarksBar />
      </div>
      <Slide />
      <div className="flex h-[6px] overflow-hidden rounded-b-[6px] bg-[#b4b4b4]">
        <div className="w-[1138px] bg-[#6a6a6a]" />
      </div>
      <div className="h-[2px] bg-[#111]" />
      <Dock />
    </div>
  );
}
